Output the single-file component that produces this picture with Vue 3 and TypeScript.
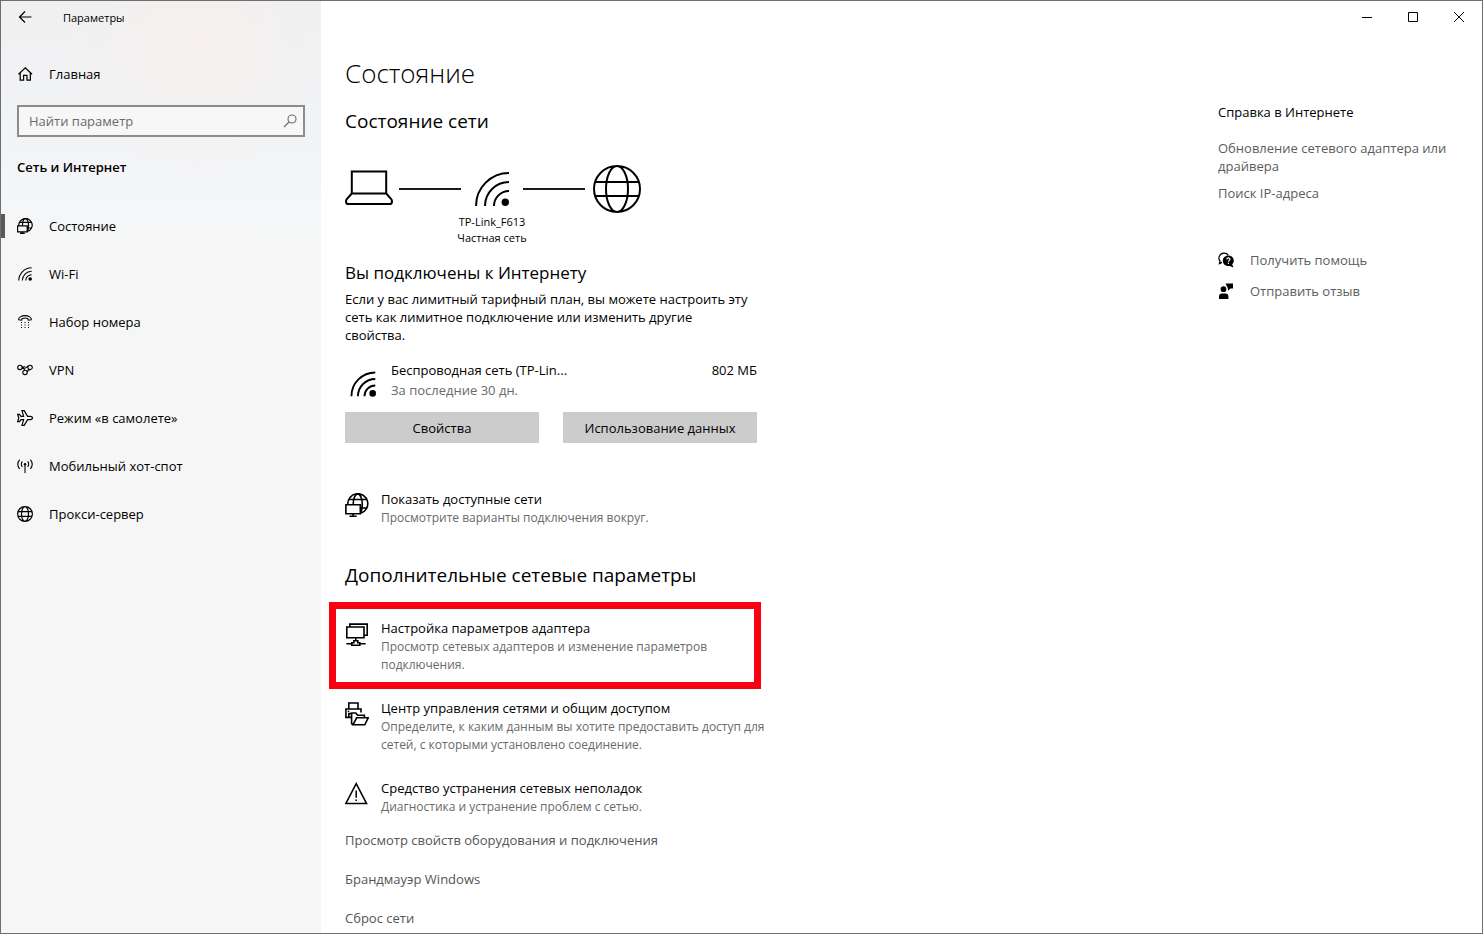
<script setup lang="ts">
import { ref } from 'vue'

interface Icon {
  box: number
  weight: number
  stroke: string
  fill?: string
}

interface NavItem {
  label: string
  icon: string
}

interface SettingItem {
  title: string
  text: string
  icon: string
}

const wifiArcs = 'M2 35A33 33 0 0 1 35 2M11 35A24 24 0 0 1 35 11M20 35A15 15 0 0 1 35 20'
const wifiDot = 'M35 31.3a3.7 3.7 0 1 1-7.4 0a3.7 3.7 0 1 1 7.4 0Z'
const wifiDotBold = 'M36 31a4.6 4.6 0 1 1-9.2 0a4.6 4.6 0 1 1 9.2 0Z'

const icons: Record<string, Icon> = {
  back: { box: 14, weight: 1.2, stroke: 'M13.5 7H1.5M7 1.5L1.5 7L7 12.5' },
  home: { box: 16, weight: 1.3, stroke: 'M1.6 8.2L8.8 1.5L16 8.2M3.4 6.8V14.4H7V9.4H10.6V14.4H14.2V6.8' },
  search: { box: 14, weight: 1.1, stroke: 'M13 5a4 4 0 1 1-8 0a4 4 0 1 1 8 0M6 8L1 13' },
  status: {
    box: 24,
    weight: 1.8,
    stroke:
      'M2.8 11.4A10 10 0 1 1 15.6 20.3M8.2 11.4C8.2 6 10 1 12.7 .9C15.4 1 17.3 6 17.3 11C17.3 15 16.6 18 15.6 20.2M4 6.5H21.6M15.6 15H21.8M.9 11.7H15.3V20.8H.9ZM8 20.8V23.3M4.5 23.2H11.6',
  },
  wifi: { box: 36, weight: 2.8, stroke: wifiArcs, fill: wifiDotBold },
  wifiLarge: { box: 36, weight: 2, stroke: wifiArcs, fill: wifiDot },
  wifiMedium: { box: 36, weight: 2.6, stroke: wifiArcs, fill: wifiDotBold },
  dial: {
    box: 16,
    weight: 1.1,
    stroke: 'M1.7 5.8C1 3.6 4.5 1.6 8 1.6S15 3.6 14.3 5.8L11.3 6.2L10.8 4.4C9 3.8 7 3.8 5.2 4.4L4.7 6.2Z',
    fill: 'M4 8h1v1H4ZM7.5 8h1v1h-1ZM11 8h1v1h-1ZM4 10.5h1v1H4ZM7.5 10.5h1v1h-1ZM11 10.5h1v1h-1ZM4 13h1v1H4ZM7.5 13h1v1h-1ZM11 13h1v1h-1Z',
  },
  vpn: {
    box: 16,
    weight: 1.1,
    stroke:
      'M5.1 5.4a2.2 2.2 0 1 1-4.4 0a2.2 2.2 0 1 1 4.4 0M15.3 5.4a2.2 2.2 0 1 1-4.4 0a2.2 2.2 0 1 1 4.4 0M10.2 10.4a2.2 2.2 0 1 1-4.4 0a2.2 2.2 0 1 1 4.4 0M2.9 3.2C6.4 3.2 6.2 7 8 8.2M13.1 3.2C9.6 3.2 9.8 7.6 5.8 6.4M2.9 7.6C5.4 7.6 6.4 5.6 7.6 4M13.1 7.6C11.4 7.6 10.6 8.6 10.2 10.4',
  },
  plane: {
    box: 16,
    weight: 1.2,
    stroke:
      'M.7 4.4H2.4L4 6.4H6.6L5 .7H7.2L10.6 6.4H13.4C16.1 6.4 16.1 9.6 13.4 9.6H10.6L7.2 15.3H5L6.6 9.6H4L2.4 11.6H.7L1.8 8Z',
  },
  hotspot: {
    box: 16,
    weight: 1.1,
    stroke:
      'M8 6.5V15M5.3 3.4C4.2 5 4.2 7.4 5.3 9M10.7 3.4C11.8 5 11.8 7.4 10.7 9M2.6 1.6C.4 4.4 .4 8.2 2.6 11M13.4 1.6C15.6 4.4 15.6 8.2 13.4 11',
    fill: 'M9.2 6.2a1.2 1.2 0 1 1-2.4 0a1.2 1.2 0 1 1 2.4 0Z',
  },
  globe: {
    box: 16,
    weight: 1.2,
    stroke:
      'M15.4 8a7.4 7.4 0 1 1-14.8 0a7.4 7.4 0 1 1 14.8 0M11.5 8a3.5 7.4 0 1 1-7 0a3.5 7.4 0 1 1 7 0M1.2 5.6H14.8M1.2 10.4H14.8',
  },
  globeLarge: {
    box: 52,
    weight: 2,
    stroke:
      'M49 25a23 23 0 1 1-46 0a23 23 0 1 1 46 0M37 25a11 23 0 1 1-22 0a11 23 0 1 1 22 0M4.5 18H47.5M4.5 32H47.5',
  },
  laptop: {
    box: 48,
    weight: 2,
    stroke: 'M6.8 7.5H41.2V29.5H6.8ZM6.8 29.5L1.8 35.2Q1 36.2 1 37.4Q1 40 3.4 40H44.6Q47 40 47 37.4Q47 36.2 46.2 35.2L41.2 29.5',
  },
  adapter: {
    box: 24,
    weight: 1.6,
    stroke:
      'M1.8 5H19V15.8H1.8ZM4.8 5V2.1H22.2V13.2H19M10.8 15.8V18.4M1.4 21.8H6.8M14.8 21.8H20.6M6.8 23.2V20.8H8.8V18.8H12.8V20.8H14.8V23.2Z',
  },
  sharing: {
    box: 24,
    weight: 1.6,
    stroke:
      'M3.8 7V1H13V7M6 15.4H.9V7H16V10.6M3.8 15V11.6H6.6M8 22.8L6.6 21.6V11H10.8L12.6 13.2H19.4V15.8M8 22.8L11.6 15.8H23.2L19.8 22.8Z',
    fill: 'M2.8 8.6h1.5v1.5H2.8Z',
  },
  trouble: {
    box: 24,
    weight: 1.5,
    stroke: 'M11.2 1.6L21.6 21.6H.8ZM11.2 8.4V15.8',
    fill: 'M10.4 17.4h1.6v1.7h-1.6Z',
  },
  minimize: { box: 12, weight: 1, stroke: 'M1 6.5H11' },
  maximize: { box: 12, weight: 1, stroke: 'M1.5 1.5H10.5V10.5H1.5Z' },
  close: { box: 12, weight: 1, stroke: 'M1 1L11 11M11 1L1 11' },
  feedback: {
    box: 16,
    weight: 0,
    stroke: '',
    fill: 'M8.4 6.2a2.9 2.9 0 1 1-5.8 0a2.9 2.9 0 1 1 5.8 0ZM1 16V13.4Q1 10.4 4 10.4H7.4Q10.4 10.4 10.4 13.4V16ZM7.6 .6H15V5.4H12.4L10 7.8V5.4L9 3.6Z',
  },
}

const nav: NavItem[] = [
  { label: 'Состояние', icon: 'status' },
  { label: 'Wi-Fi', icon: 'wifi' },
  { label: 'Набор номера', icon: 'dial' },
  { label: 'VPN', icon: 'vpn' },
  { label: 'Режим «в самолете»', icon: 'plane' },
  { label: 'Мобильный хот-спот', icon: 'hotspot' },
  { label: 'Прокси-сервер', icon: 'globe' },
]

const advanced: SettingItem[] = [
  {
    title: 'Настройка параметров адаптера',
    text: 'Просмотр сетевых адаптеров и изменение параметров подключения.',
    icon: 'adapter',
  },
  {
    title: 'Центр управления сетями и общим доступом',
    text: 'Определите, к каким данным вы хотите предоставить доступ для сетей, с которыми установлено соединение.',
    icon: 'sharing',
  },
  {
    title: 'Средство устранения сетевых неполадок',
    text: 'Диагностика и устранение проблем с сетью.',
    icon: 'trouble',
  },
]

const moreLinks = ['Просмотр свойств оборудования и подключения', 'Брандмауэр Windows', 'Сброс сети']
const captions = [
  { icon: 'minimize', label: 'Свернуть' },
  { icon: 'maximize', label: 'Развернуть' },
  { icon: 'close', label: 'Закрыть' },
]

const query = ref('')
const current = ref('Состояние')
const marked = 'adapter'
</script>

<template>
  <div class="window">
    <aside class="sidebar">
      <header class="titlebar">
        <button class="back" type="button" aria-label="Назад">
          <svg class="i14" viewBox="0 0 14 14"><path class="line" :d="icons.back.stroke" :stroke-width="icons.back.weight" /></svg>
        </button>
        <span class="app-name">Параметры</span>
      </header>

      <a class="row home" href="#home">
        <svg class="i16" viewBox="0 0 17 16"><path class="line" :d="icons.home.stroke" :stroke-width="icons.home.weight" /></svg>
        <span>Главная</span>
      </a>

      <form class="search" role="search" @submit.prevent>
        <input v-model="query" type="text" placeholder="Найти параметр" aria-label="Найти параметр" />
        <button type="submit" aria-label="Поиск">
          <svg class="i14" viewBox="0 0 14 14"><path class="line" :d="icons.search.stroke" :stroke-width="icons.search.weight" /></svg>
        </button>
      </form>

      <h2 class="section">Сеть и Интернет</h2>

      <nav>
        <a
          v-for="item in nav"
          :key="item.label"
          class="row"
          :class="{ active: item.label === current }"
          href="#"
          @click.prevent="current = item.label"
        >
          <svg :class="item.icon === 'wifi' ? 'i14' : 'i16'" :viewBox="`0 0 ${icons[item.icon].box} ${icons[item.icon].box}`">
            <path class="line" :d="icons[item.icon].stroke" :stroke-width="icons[item.icon].weight" />
            <path v-if="icons[item.icon].fill" :d="icons[item.icon].fill" />
          </svg>
          <span>{{ item.label }}</span>
        </a>
      </nav>
    </aside>

    <div class="page">
      <div class="captions">
        <button v-for="c in captions" :key="c.icon" type="button" :aria-label="c.label">
          <svg class="i12" viewBox="0 0 12 12"><path class="line" :d="icons[c.icon].stroke" :stroke-width="icons[c.icon].weight" /></svg>
        </button>
      </div>

      <div class="columns">
        <main class="content">
          <h1>Состояние</h1>
          <h2 class="group">Состояние сети</h2>

          <div class="diagram">
            <svg class="laptop" viewBox="0 0 48 50"><path class="line" :d="icons.laptop.stroke" :stroke-width="icons.laptop.weight" /></svg>
            <span class="wire"></span>
            <svg class="i36" viewBox="0 0 36 36">
              <path class="line" :d="icons.wifiLarge.stroke" :stroke-width="icons.wifiLarge.weight" />
              <path :d="icons.wifiLarge.fill" />
            </svg>
            <span class="wire"></span>
            <svg class="world" viewBox="0 0 52 50"><path class="line" :d="icons.globeLarge.stroke" :stroke-width="icons.globeLarge.weight" /></svg>
          </div>
          <p class="network">TP-Link_F613<br />Частная сеть</p>

          <h3>Вы подключены к Интернету</h3>
          <p class="about">
            Если у вас лимитный тарифный план, вы можете настроить эту сеть как лимитное подключение или изменить другие свойства.
          </p>

          <div class="usage">
            <svg class="i26" viewBox="0 0 36 36">
              <path class="line" :d="icons.wifiMedium.stroke" :stroke-width="icons.wifiMedium.weight" />
              <path :d="icons.wifiMedium.fill" />
            </svg>
            <div class="usage-name">
              <div>Беспроводная сеть (TP-Lin...</div>
              <div class="muted">За последние 30 дн.</div>
            </div>
            <div>802 МБ</div>
          </div>
          <div class="actions">
            <button type="button">Свойства</button>
            <button type="button">Использование данных</button>
          </div>

          <a class="item available" href="#networks">
            <svg class="i24" viewBox="0 0 24 24"><path class="line" :d="icons.status.stroke" stroke-width="1.6" /></svg>
            <span class="item-text">
              <span>Показать доступные сети</span>
              <span class="desc">Просмотрите варианты подключения вокруг.</span>
            </span>
          </a>

          <h2 class="group more">Дополнительные сетевые параметры</h2>

          <a v-for="item in advanced" :key="item.title" class="item" :class="{ marked: item.icon === marked }" href="#">
            <svg class="i24" viewBox="0 0 24 24">
              <path class="line" :d="icons[item.icon].stroke" :stroke-width="icons[item.icon].weight" />
              <path v-if="icons[item.icon].fill" :d="icons[item.icon].fill" />
            </svg>
            <span class="item-text">
              <span>{{ item.title }}</span>
              <span class="desc">{{ item.text }}</span>
            </span>
          </a>

          <div class="links">
            <a v-for="link in moreLinks" :key="link" href="#">{{ link }}</a>
          </div>
        </main>

        <aside class="help">
          <h2>Справка в Интернете</h2>
          <a href="#driver">Обновление сетевого адаптера или драйвера</a>
          <a href="#ip">Поиск IP-адреса</a>
          <div class="support">
            <a href="#help">
              <svg class="i16" viewBox="0 0 16 16">
                <path class="line" stroke-width="1.2" d="M4 10.4L1.4 11.6L2 9.2C-.4 6 1.4 1.6 5.8 1.2C8 1 9.4 2 10.2 3.2" />
                <path d="M15.8 8.6C15.8 10.2 15.2 11.4 14.2 12.4L15.6 15.4L11.6 14C7.6 14.6 4.8 12 4.8 8.8C4.8 5.8 7.2 3.4 10.3 3.4S15.8 5.6 15.8 8.6Z" />
                <path class="line cut" stroke-width="1.2" d="M8.8 7.4C8.8 5.4 12 5.4 12 7.2C12 8.4 10.4 8.4 10.4 9.8M10.4 10.8V12" />
              </svg>
              <span>Получить помощь</span>
            </a>
            <a href="#feedback">
              <svg class="i16" viewBox="0 0 16 16"><path :d="icons.feedback.fill" /></svg>
              <span>Отправить отзыв</span>
            </a>
          </div>
        </aside>
      </div>
    </div>
  </div>
</template>

<style>
body {
  margin: 0;
  background: #fff;
}
</style>

<style scoped>
.window {
  box-sizing: border-box;
  display: grid;
  grid-template-columns: 320px 1fr;
  min-height: 100vh;
  border: 1px solid #6e6e6e;
  background: #fff;
  color: #000;
  font: 13px/18px "Open Sans", "Noto Sans", sans-serif;
}

h1,
h2,
h3,
p {
  margin: 0;
  font-weight: 400;
}

a {
  color: inherit;
  text-decoration: none;
}

button {
  border: 0;
  padding: 0;
  background: none;
  color: inherit;
  font: inherit;
}

svg {
  display: block;
  flex: none;
}

.line {
  fill: none;
  stroke: #000;
}

.cut {
  stroke: #fff;
}

.i12 { width: 12px; height: 12px; }
.i14 { width: 14px; height: 14px; }
.i16 { width: 16px; height: 16px; }
.i24 { width: 24px; height: 24px; }
.i26 { width: 26px; height: 26px; }
.i36 { width: 36px; height: 36px; }

.sidebar {
  background:
    radial-gradient(circle at 195px 45px, #f5f0ee 0, rgba(245, 240, 238, 0) 130px),
    linear-gradient(180deg, #f0f0f1 0, #f2f3f5 120px, #f5f6f7 200px, #f6f6f6 300px);
}

.titlebar {
  display: flex;
  align-items: center;
  height: 32px;
  font-size: 11px;
}

.app-name {
  padding-top: 2px;
}

.back {
  display: flex;
  align-items: center;
  width: 62px;
  height: 32px;
  padding-left: 17px;
}

.row {
  display: flex;
  align-items: center;
  gap: 16px;
  height: 48px;
  padding-left: 16px;
}

.row .i14 {
  margin: 0 1px;
}

.home {
  margin-top: 17px;
}

.active {
  background: linear-gradient(#5a5a5a, #5a5a5a) 0 50% / 4px 24px no-repeat;
}

.search {
  display: flex;
  box-sizing: border-box;
  height: 32px;
  margin: 7px 16px 0;
  border: 2px solid #8c8c8c;
  background: #f7f7f8;
}

.search input {
  flex: 1;
  min-width: 0;
  border: 0;
  padding: 0 10px;
  outline: 0;
  background: none;
  color: #000;
  font: inherit;
}

.search input::placeholder {
  color: #6a6a6a;
  opacity: 1;
}

.search button {
  padding: 0 6px;
}

.search .line {
  stroke: #6a6a6a;
}

.section {
  margin: 20px 16px 25px;
  font-size: 13px;
  font-weight: 600;
  line-height: 20px;
}

.captions {
  display: flex;
  justify-content: flex-end;
  height: 32px;
}

.captions button {
  display: grid;
  place-items: center;
  width: 46px;
}

.columns {
  display: flex;
  justify-content: space-between;
  padding: 22px 24px 5px;
}

.content {
  width: 432px;
}

h1 {
  font-size: 26px;
  font-weight: 300;
  line-height: 36px;
}

.group {
  margin-top: 16px;
  font-size: 19px;
  line-height: 28px;
}

.diagram {
  display: grid;
  grid-template-columns: 48px 62px 50px 62px 52px;
  gap: 6px;
  place-items: center;
  margin-top: 29px;
}

.laptop {
  width: 48px;
  height: 50px;
}

.world {
  width: 52px;
  height: 50px;
}

.wire {
  width: 100%;
  height: 2px;
  background: #1a1a1a;
}

.network {
  width: 294px;
  font-size: 11px;
  line-height: 16px;
  text-align: center;
}

h3 {
  margin-top: 15px;
  font-size: 17px;
  line-height: 24px;
}

.about {
  width: 408px;
  margin-top: 5px;
}

.usage {
  display: flex;
  width: 412px;
  margin-top: 16px;
  line-height: 20px;
}

.usage svg {
  margin: 11px 15px 0 5px;
}

.usage-name {
  flex: 1;
}

.muted,
.desc {
  color: #6a6a6a;
}

.actions {
  display: grid;
  grid-template-columns: 1fr 1fr;
  gap: 24px;
  width: 412px;
  margin-top: 12px;
}

.actions button {
  height: 31px;
  background: #ccc;
}

.item {
  display: flex;
  gap: 12px;
  margin-top: 25px;
}

.item svg {
  margin-top: 3px;
}

.item-text {
  display: grid;
  row-gap: 1px;
}

.desc {
  font-size: 12px;
}

.available {
  margin-top: 47px;
}

.more {
  margin-top: 34px;
}

.marked {
  box-sizing: border-box;
  width: 432px;
  margin: 13px 0 0 -16px;
  border: 7px solid #fb0010;
  padding: 10px 9px 8px;
}

.marked + .item {
  margin-top: 10px;
}

.links {
  display: grid;
  gap: 19px;
  justify-items: start;
  margin-top: 14px;
  color: #555;
  line-height: 20px;
}

.help {
  display: flex;
  flex-direction: column;
  align-items: flex-start;
  width: 240px;
  padding-top: 47px;
  color: #5c5c5c;
}

.help h2 {
  margin-bottom: 8px;
  color: #000;
  font-size: 13px;
  line-height: 20px;
}

.help > a {
  margin-top: 9px;
}

.support {
  display: grid;
  gap: 13px;
  margin-top: 49px;
}

.support a {
  display: flex;
  align-items: center;
  gap: 16px;
}

.support svg {
  fill: #000;
}
</style>
